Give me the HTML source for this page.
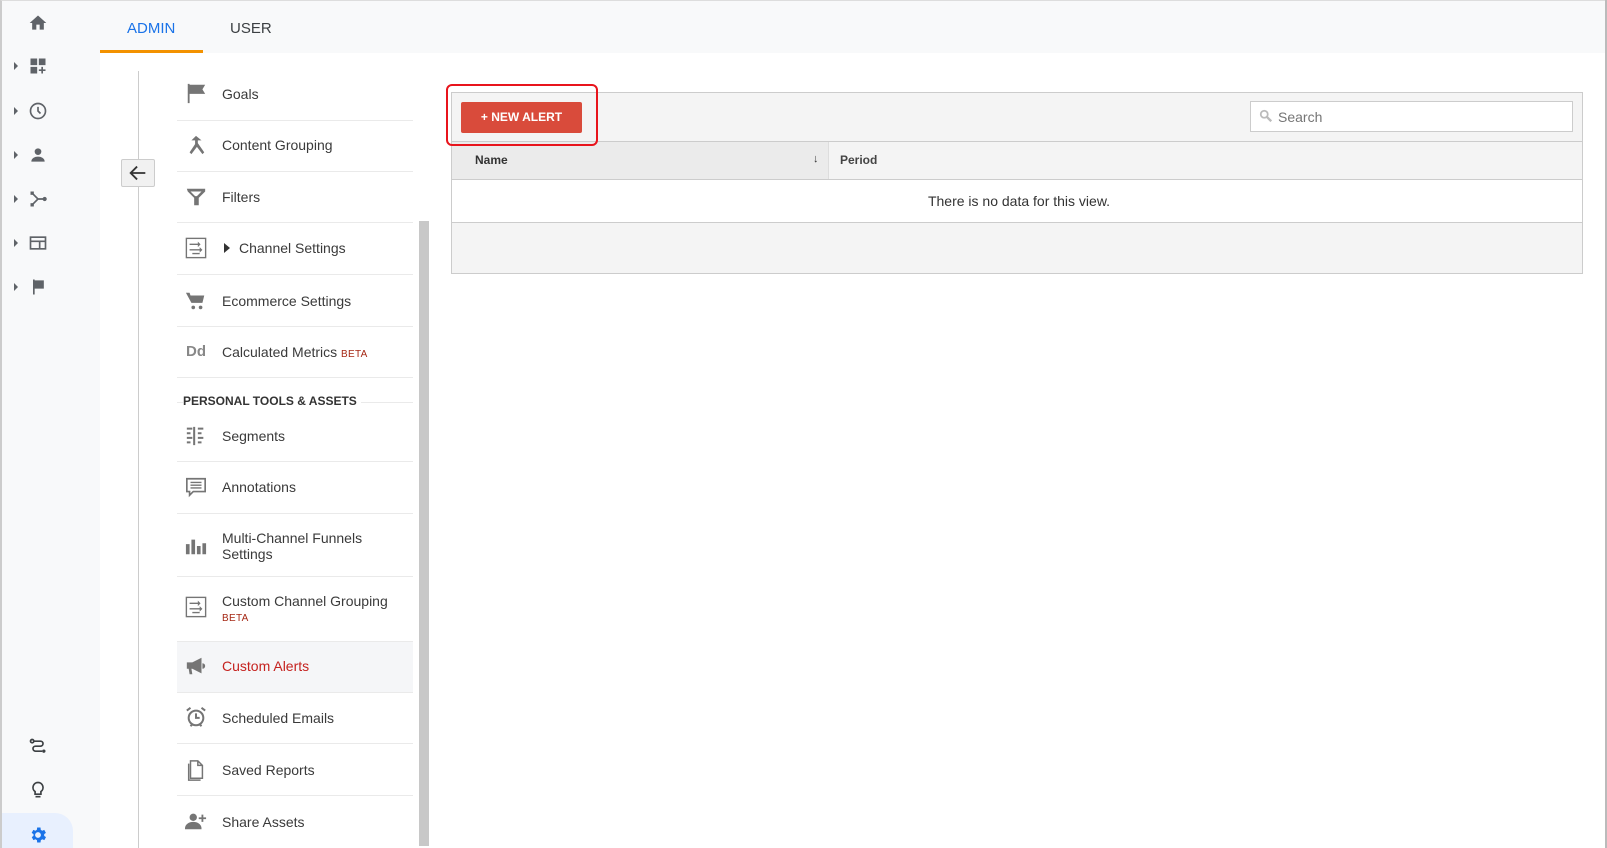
<!DOCTYPE html>
<html><head><meta charset="utf-8"><style>
*{margin:0;padding:0;box-sizing:border-box}
body{width:1607px;height:848px;overflow:hidden;background:#fff;font-family:"Liberation Sans",Arial,sans-serif;color:#333;position:relative}
.a{position:absolute}
.rail{left:0;top:0;width:100px;height:848px;background:#f8f9fa;border-left:2px solid #ccc;border-top:1px solid #ddd}
.tabs{left:100px;top:0;width:1507px;height:53px;background:#f8f9fa;border-top:1px solid #ddd}
.ri{position:absolute;left:28px;width:20px;height:20px}
.car{position:absolute;left:14px;width:0;height:0;border-top:4px solid transparent;border-bottom:4px solid transparent;border-left:4px solid #5f6368}
.sep{position:absolute;left:177px;width:236px;height:1px;background:#eaeaea}
.t{position:absolute;left:222px;font-size:14px;color:#3a3a3a;line-height:16px}
.ic{position:absolute;left:185px;width:22px;height:22px}
.beta{font-size:10px;color:#a52714;letter-spacing:.3px}
</style></head><body>
<div class="a rail"></div>
<div class="a tabs"></div>
<div class="a" style="right:0;top:0;width:2px;height:848px;background:#bbb"></div>
<div class="a" style="left:127px;top:20px;font-size:15px;color:#1a73e8">ADMIN</div>
<div class="a" style="left:230px;top:20px;font-size:15px;color:#3c4043">USER</div>
<div class="a" style="left:100px;top:50px;width:103px;height:3px;background:#f39200"></div>

<svg class="ri" style="top:13px" viewBox="0 0 24 24"><path d="M10 20v-6h4v6h5v-8h3L12 3 2 12h3v8z" fill="#5f6368"/></svg>
<div class="car" style="top:62px"></div>
<svg class="ri" style="top:56px" viewBox="0 0 24 24"><path d="M3 3h8v8H3zM13 3h8v8h-8zM3 13h8v8H3zM16 13h2v3h3v2h-3v3h-2v-3h-3v-2h3z" fill="#5f6368"/></svg>
<div class="car" style="top:107px"></div>
<svg class="ri" style="top:101px" viewBox="0 0 24 24"><circle cx="12" cy="12" r="9" fill="none" stroke="#5f6368" stroke-width="2"/><path d="M12 7v5l3 3" fill="none" stroke="#5f6368" stroke-width="2"/></svg>
<div class="car" style="top:151px"></div>
<svg class="ri" style="top:145px" viewBox="0 0 24 24"><circle cx="12" cy="8" r="4" fill="#5f6368"/><path d="M4 20c0-4 4-6 8-6s8 2 8 6z" fill="#5f6368"/></svg>
<div class="car" style="top:195px"></div>
<svg class="ri" style="top:189px" viewBox="0 0 24 24"><path d="M5 5l7 7-7 7M12 12h8" fill="none" stroke="#5f6368" stroke-width="2"/><rect x="3" y="3" width="4" height="4" fill="#5f6368"/><rect x="3" y="17" width="4" height="4" fill="#5f6368"/><circle cx="20" cy="12" r="2.5" fill="#5f6368"/></svg>
<div class="car" style="top:239px"></div>
<svg class="ri" style="top:233px" viewBox="0 0 24 24"><rect x="3" y="5" width="18" height="14" fill="none" stroke="#5f6368" stroke-width="2"/><path d="M3 10h18M14 10v9" stroke="#5f6368" stroke-width="2"/></svg>
<div class="car" style="top:283px"></div>
<svg class="ri" style="top:277px" viewBox="0 0 24 24"><path d="M6 3v18h2v-7h11V4H8V3z" fill="#5f6368"/></svg>
<svg class="ri" style="top:737px" viewBox="0 0 24 24"><circle cx="5" cy="5" r="2" fill="none" stroke="#3c4043" stroke-width="2"/><path d="M7 5h8a3 3 0 010 6H9a3 3 0 000 6h8" fill="none" stroke="#3c4043" stroke-width="2"/><circle cx="19" cy="17" r="2" fill="#3c4043"/></svg>
<svg class="ri" style="top:780px" viewBox="0 0 24 24"><path d="M12 3a6 6 0 00-3.5 10.9V17h7v-3.1A6 6 0 0012 3zM9 20h6" fill="none" stroke="#3c4043" stroke-width="2"/></svg>
<div class="a" style="left:2px;top:813px;width:71px;height:35px;background:#e8f0fe;border-radius:0 18px 0 0"></div>
<svg class="ri" style="top:825px" viewBox="0 0 24 24"><path d="M19.4 13a7.5 7.5 0 000-2l2.1-1.6-2-3.5-2.5 1a7 7 0 00-1.7-1L15 3h-4l-.4 2.9a7 7 0 00-1.7 1l-2.5-1-2 3.5L6.6 11a7.5 7.5 0 000 2l-2.1 1.6 2 3.5 2.5-1a7 7 0 001.7 1L11 21h4l.4-2.9a7 7 0 001.7-1l2.5 1 2-3.5zM12 15.5a3.5 3.5 0 110-7 3.5 3.5 0 010 7z" fill="#1a73e8"/></svg>

<div class="a" style="left:138px;top:71px;width:1px;height:777px;background:#ccc"></div>
<div class="a" style="left:121px;top:159px;width:34px;height:28px;background:#f1f1f1;border:1px solid #ccc;border-radius:2px"></div>
<svg class="a" style="left:127px;top:162px;width:22px;height:22px" viewBox="0 0 24 24"><path d="M20 12H5M11 5l-7 7 7 7" fill="none" stroke="#333" stroke-width="2"/></svg>

<div class="a" style="left:177px;top:641px;width:236px;height:51px;background:#f5f6f8"></div>
<div class="sep" style="top:120px"></div><div class="sep" style="top:171px"></div><div class="sep" style="top:222px"></div><div class="sep" style="top:274px"></div><div class="sep" style="top:326px"></div><div class="sep" style="top:377px"></div><div class="sep" style="top:402px"></div><div class="sep" style="top:461px"></div><div class="sep" style="top:513px"></div><div class="sep" style="top:576px"></div><div class="sep" style="top:641px"></div><div class="sep" style="top:692px"></div><div class="sep" style="top:743px"></div><div class="sep" style="top:795px"></div>

<svg class="ic" style="top:82px" viewBox="0 0 24 24"><path d="M3 2h2v21H3zM5 3h17l-3 5 3 5H5z" fill="#757575"/></svg>
<div class="t" style="top:86px">Goals</div>
<svg class="ic" style="top:134px" viewBox="0 0 24 24"><path d="M12 2l-5 5h4v4l-6 9 2 2 6-8 6 8 2-2-7-10V7h4z" fill="#757575"/></svg>
<div class="t" style="top:137px">Content Grouping</div>
<svg class="ic" style="top:186px" viewBox="0 0 24 24"><path d="M2 3h20v3l-7 7v8h-5v-8L3 6z" fill="#757575"/><path d="M6 6h12l-5 5h-2z" fill="#fff"/></svg>
<div class="t" style="top:189px">Filters</div>
<svg class="ic" style="top:237px" viewBox="0 0 24 24"><rect x="1.5" y="1.5" width="21" height="21" fill="none" stroke="#757575" stroke-width="1.5"/><path d="M5 8h10M5 14h13M8 18h8" stroke="#757575" stroke-width="1.5"/><path d="M14 5l3 3-3 3zM16 11l3 3-3 3z" fill="#757575"/></svg>
<div class="a" style="left:224px;top:243px;border-top:5px solid transparent;border-bottom:5px solid transparent;border-left:6px solid #333"></div>
<div class="t" style="left:239px;top:240px">Channel Settings</div>
<svg class="ic" style="top:290px" viewBox="0 0 24 24"><path d="M1 3h4l1 3h15l-2 8H7z" fill="#757575"/><circle cx="9" cy="19" r="2" fill="#757575"/><circle cx="17" cy="19" r="2" fill="#757575"/></svg>
<div class="t" style="top:293px">Ecommerce Settings</div>
<div class="a" style="left:186px;top:343px;font-size:15px;font-weight:bold;color:#888">Dd</div>
<div class="t" style="top:344px">Calculated Metrics <span class="beta">BETA</span></div>
<div class="a" style="left:183px;top:394px;font-size:12px;font-weight:bold;color:#333;background:#fff;padding-right:4px">PERSONAL TOOLS &amp; ASSETS</div>
<svg class="ic" style="top:425px" viewBox="0 0 24 24"><path d="M2 4h6M2 9h4M2 14h6M2 19h4M10 2v20M14 4h6M14 9h4M14 14h6M14 19h4" stroke="#757575" stroke-width="2.2"/></svg>
<div class="t" style="top:428px">Segments</div>
<svg class="ic" style="top:476px" viewBox="0 0 24 24"><path d="M2 3h20v14H9l-4 4v-4H2z" fill="none" stroke="#757575" stroke-width="1.8"/><path d="M6 7h12M6 10h12M6 13h12" stroke="#757575" stroke-width="1.5"/></svg>
<div class="t" style="top:479px">Annotations</div>
<svg class="ic" style="top:535px" viewBox="0 0 24 24"><path d="M1 10h4v11H1zM7 5h4v16H7zM13 12h4v9h-4zM19 9h4v12h-4z" fill="#757575"/></svg>
<div class="t" style="top:530px">Multi-Channel Funnels<br>Settings</div>
<svg class="ic" style="top:596px" viewBox="0 0 24 24"><rect x="1.5" y="1.5" width="21" height="21" fill="none" stroke="#757575" stroke-width="1.5"/><path d="M5 8h10M5 14h13M8 18h8" stroke="#757575" stroke-width="1.5"/><path d="M14 5l3 3-3 3zM16 11l3 3-3 3z" fill="#757575"/></svg>
<div class="t" style="top:593px">Custom Channel Grouping</div>
<div class="a beta" style="left:222px;top:613px">BETA</div>
<svg class="ic" style="top:655px" viewBox="0 0 24 24"><path d="M2 8h6l10-5v17L8 15H7l1 6H5l-1-6H2zM19 9a3 3 0 010 6z" fill="#757575"/></svg>
<div class="t" style="top:658px;color:#c5221f">Custom Alerts</div>
<svg class="ic" style="top:706px" viewBox="0 0 24 24"><circle cx="12" cy="13" r="8" fill="none" stroke="#757575" stroke-width="2.2"/><path d="M12 8v5h4M2 5l4-3M22 5l-4-3M6 22l2-2M18 22l-2-2" fill="none" stroke="#757575" stroke-width="2.2"/></svg>
<div class="t" style="top:710px">Scheduled Emails</div>
<svg class="ic" style="top:759px" viewBox="0 0 24 24"><path d="M6 2h8l5 5v14H6z M14 2v5h5" fill="none" stroke="#757575" stroke-width="1.6"/><path d="M4 5v18h13" fill="none" stroke="#757575" stroke-width="1.6"/></svg>
<div class="t" style="top:762px">Saved Reports</div>
<svg class="ic" style="top:810px" viewBox="0 0 24 24"><circle cx="9" cy="8" r="4" fill="#757575"/><path d="M1 20c0-4 4-6 8-6s8 2 8 6zM19 5v8M15 9h8" fill="#757575" stroke="#757575" stroke-width="2"/></svg>
<div class="t" style="top:814px">Share Assets</div>
<div class="a" style="left:419px;top:221px;width:10px;height:625px;background:#c8c8c8"></div>

<div class="a" style="left:451px;top:92px;width:1132px;height:182px;border:1px solid #ccc;background:#f4f4f4"></div>
<div class="a" style="left:452px;top:141px;width:1130px;height:1px;background:#ccc"></div>
<div class="a" style="left:452px;top:142px;width:377px;height:37px;background:#ebebeb;border-right:1px solid #ddd"></div>
<div class="a" style="left:452px;top:179px;width:1130px;height:44px;background:#fff;border-top:1px solid #ccc;border-bottom:1px solid #ccc"></div>
<div class="a" style="left:475px;top:153px;font-size:12px;font-weight:bold;color:#333">Name</div>
<div class="a" style="left:813px;top:153px;font-size:11px;font-weight:bold;color:#333">&#8595;</div>
<div class="a" style="left:840px;top:153px;font-size:12px;font-weight:bold;color:#444">Period</div>
<div class="a" style="left:452px;top:193px;width:1130px;text-align:center;font-size:14px;color:#333;padding-left:4px">There is no data for this view.</div>
<div class="a" style="left:461px;top:102px;width:121px;height:31px;background:#d94b3b;border-radius:2px;color:#fff;font-size:12px;font-weight:bold;text-align:center;line-height:31px">+ NEW ALERT</div>
<div class="a" style="left:446px;top:84px;width:152px;height:62px;border:2px solid #e8141c;border-radius:6px"></div>
<div class="a" style="left:1250px;top:101px;width:323px;height:31px;background:#fff;border:1px solid #ccc"></div>
<svg class="a" style="left:1259px;top:109px;width:14px;height:14px" viewBox="0 0 24 24"><circle cx="9" cy="9" r="6" fill="none" stroke="#bbb" stroke-width="3"/><path d="M13 13l8 8" stroke="#bbb" stroke-width="4"/></svg>
<div class="a" style="left:1278px;top:109px;font-size:14px;color:#757575">Search</div>
</body></html>
